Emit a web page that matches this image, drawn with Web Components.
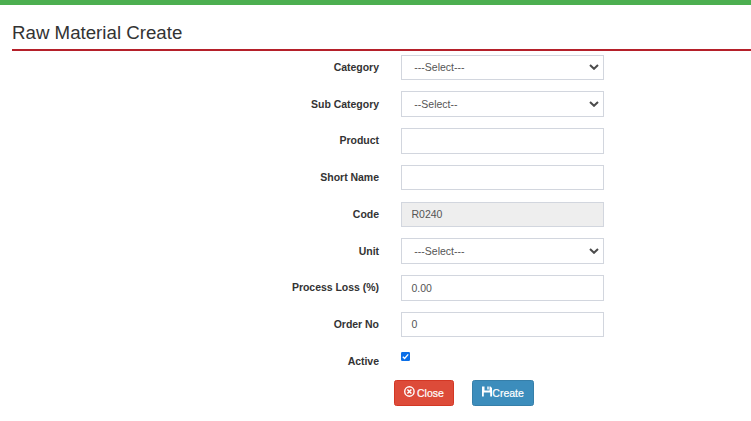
<!DOCTYPE html>
<html lang="en">
<head>
<meta charset="utf-8">
<title>Raw Material Create</title>
<style>
html,body{margin:0;height:100%;background:#fff;overflow:hidden}
body{font-family:"Liberation Sans",Arial,sans-serif;font-size:10.5px;color:#333}
</style>
</head>
<body>
<material-page heading="Raw Material Create">
  <form-row label="Category"><form-field kind="select">---Select---</form-field></form-row>
  <form-row label="Sub Category"><form-field kind="select">--Select--</form-field></form-row>
  <form-row label="Product"><form-field></form-field></form-row>
  <form-row label="Short Name"><form-field></form-field></form-row>
  <form-row label="Code"><form-field kind="readonly">R0240</form-field></form-row>
  <form-row label="Unit"><form-field kind="select">---Select---</form-field></form-row>
  <form-row label="Process Loss (%)"><form-field>0.00</form-field></form-row>
  <form-row label="Order No"><form-field>0</form-field></form-row>
  <form-row label="Active"><check-mark></check-mark></form-row>
  <action-button slot="actions" kind="close">Close</action-button>
  <action-button slot="actions" kind="create">Create</action-button>
</material-page>
<script>
class Base extends HTMLElement {
  connectedCallback() {
    if (!this.shadowRoot) this.attachShadow({mode: "open"}).innerHTML = this.render();
  }
}
customElements.define("material-page", class extends Base {
  render() {
    return `<style>
      :host{display:block;border-top:5px solid #4caf50}
      header{margin-left:12px;height:44px;border-bottom:2px solid #b5202a;box-sizing:content-box}
      h1{margin:0;padding-top:17px;font-size:18.7px;line-height:22px;font-weight:400;color:#333}
      main{padding-top:3.6px}
      footer{display:flex;gap:18px;margin:-5.35px 0 0 394px}
    </style>
    <header><h1>${this.getAttribute("heading")}</h1></header>
    <main><slot></slot></main><footer><slot name="actions"></slot></footer>`;
  }
});
customElements.define("form-row", class extends Base {
  render() {
    return `<style>
      :host{display:grid;grid-template-columns:379px 203px;column-gap:22px;height:36.75px;align-items:start}
      label{text-align:right;font-weight:700;line-height:15px;padding-top:5.2px;letter-spacing:-.03px;white-space:nowrap}
    </style><label>${this.getAttribute("label")}</label><slot></slot>`;
  }
});
customElements.define("form-field", class extends Base {
  render() {
    const select = this.getAttribute("kind") === "select";
    return `<style>
      :host{display:flex;align-items:center;justify-content:space-between;box-sizing:border-box;height:25.5px;border:1px solid #d2d6de;padding:0 4px 0 9.5px;background:#fff;color:#555;white-space:nowrap}
      :host([kind=select]){padding-left:12.3px}
      :host([kind=readonly]){background:#eee}
      span{line-height:15px;margin-top:.4px}
      svg{display:block;width:10px;height:6px;margin-top:-.8px}
    </style><span><slot></slot></span>${select ? `<svg viewBox="0 0 10 6"><path d="M1 1l4 3.8L9 1" fill="none" stroke="#4b4b4b" stroke-width="2"/></svg>` : ""}`;
  }
});
customElements.define("check-mark", class extends Base {
  render() {
    return `<style>
      :host{display:block;width:9px;height:9px;margin-top:3.4px}svg{display:block}
    </style><svg width="9" height="9" viewBox="0 0 9 9"><rect width="9" height="9" rx="1.2" fill="#0b6fe8"/><path d="M1.8 4.7l1.8 1.8 3.6-4.2" fill="none" stroke="#fff" stroke-width="1.3"/></svg>`;
  }
});
customElements.define("action-button", class extends Base {
  render() {
    const close = this.getAttribute("kind") === "close";
    const icon = close
      ? `<svg width="11" height="11" viewBox="0 0 11 11"><circle cx="5.4" cy="5.5" r="4.7" fill="none" stroke="#fff" stroke-width="1.4"/><path d="M3.4 3.5l4 4M7.4 3.5l-4 4" stroke="#fff" stroke-width="1.5"/></svg>`
      : `<svg width="10" height="11" viewBox="0 0 10 11"><path fill="#fff" fill-rule="evenodd" d="M0 .5H2.5v4h5v-4h1L10 2v8.5H8.2V6.6H1.8v3.9H0zM5.3.5h1.4v3H5.3z"/></svg>`;
    return `<style>
      :host{display:flex;box-sizing:border-box;width:60px;height:26px;border:1px solid #d33724;border-radius:2.5px;background:#dd4b39;color:#fff;padding:5px 0 0 9px;line-height:15px;white-space:nowrap}
      :host([kind=create]){width:62px;background:#3c8dbc;border-color:#367fa9}
      svg{display:block;flex:none}
      span{margin-left:${close ? 2 : .3}px;-webkit-text-stroke:.2px #fff}
    </style>${icon}<span><slot></slot></span>`;
  }
});
</script>
</body>
</html>
